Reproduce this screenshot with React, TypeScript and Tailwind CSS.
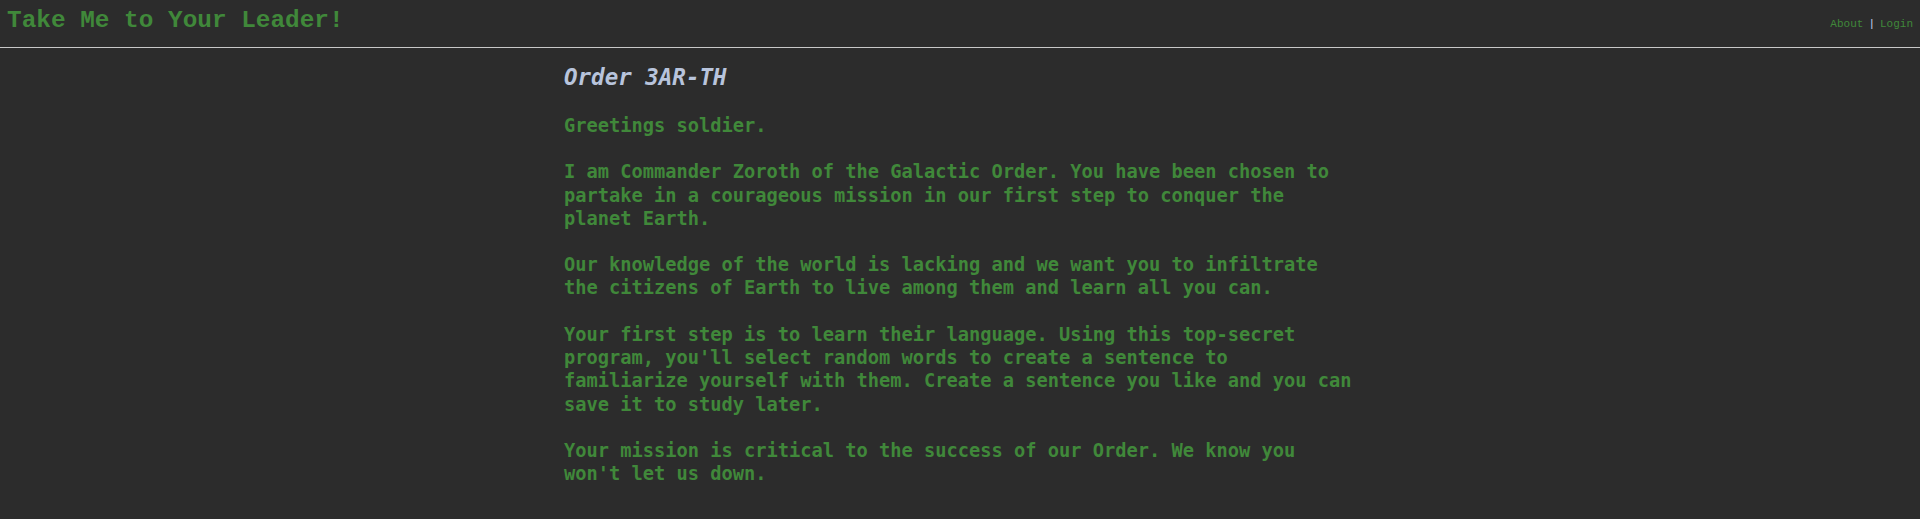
const paragraphs = [
  "Greetings soldier.",
  "I am Commander Zoroth of the Galactic Order. You have been chosen to partake in a courageous mission in our first step to conquer the planet Earth.",
  "Our knowledge of the world is lacking and we want you to infiltrate the citizens of Earth to live among them and learn all you can.",
  "Your first step is to learn their language. Using this top-secret program, you'll select random words to create a sentence to familiarize yourself with them. Create a sentence you like and you can save it to study later.",
  "Your mission is critical to the success of our Order. We know you won't let us down.",
];

function Header() {
  return (
    <header className="flex justify-between items-start h-[48px] border-b border-[#c8c8c8] px-[7px]">
      <h1 className="pt-[7px] text-[24.4px] leading-[27px] font-bold text-[#40883a] font-['Liberation_Mono',monospace]">
        Take Me to Your Leader!
      </h1>
      <nav className="pt-[18px] text-[11px] leading-[12px] font-['Liberation_Mono',monospace] text-[#40883a]">
        <a href="#">About</a>
        <span className="text-[#c8d0f0] mx-[5px]">|</span>
        <a href="#">Login</a>
      </nav>
    </header>
  );
}

export default function App() {
  return (
    <div className="min-h-[519px] bg-[#2c2c2c] font-['DejaVu_Sans_Mono',monospace]">
      <Header />
      <main className="max-w-[792px] mx-auto pt-[16px]">
        <h2 className="text-[22.5px] leading-[27px] font-bold italic text-[#b8c4dc]">Order 3AR-TH</h2>
        <div className="mt-[23px] space-y-[23px] text-[18.7px] leading-[23.3px] font-bold text-[#40883a]">
          {paragraphs.map((p, i) => (
            <p key={i}>{p}</p>
          ))}
        </div>
      </main>
    </div>
  );
}
